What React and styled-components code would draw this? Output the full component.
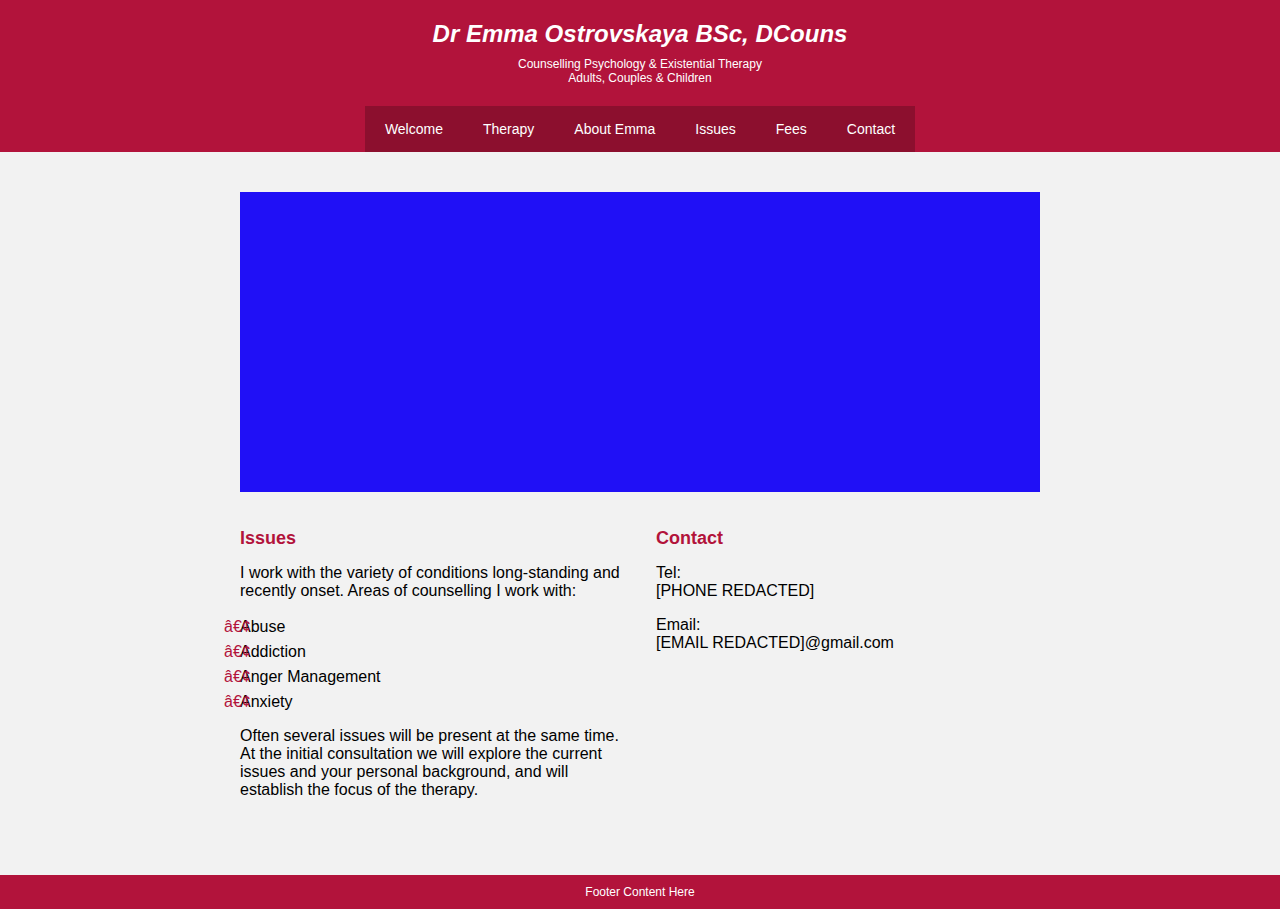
import React from "react";
import styled, { createGlobalStyle } from "styled-components";

const GlobalStyle = createGlobalStyle`
  html, body { margin: 0; padding: 0; }
  body {
    background: #f2f2f2;
    font-family: "Liberation Sans", Arial, sans-serif;
    color: #000;
  }
`;

const Page = styled.div`
  min-height: 909px;
  display: flex;
  flex-direction: column;
`;

const Header = styled.header`
  background: #b2133b;
  color: #fff;
  text-align: center;
  padding-top: 20px;
  display: flex;
  flex-direction: column;
  align-items: center;
`;

const Title = styled.h1`
  margin: 0;
  font-size: 24px;
  font-style: italic;
  font-weight: bold;
  line-height: 27px;
`;

const Subtitle = styled.p`
  margin: 10px 0 0;
  font-size: 12px;
  line-height: 14px;
`;

const Nav = styled.nav`
  margin-top: 21px;
  background: #8c0f2e;
  display: flex;
`;

const NavLink = styled.a`
  display: block;
  padding: 15px 20px;
  font-size: 14px;
  line-height: 16px;
  color: #fff;
  text-decoration: none;
`;

const Main = styled.main`
  flex: 1;
  width: 800px;
  margin: 0 auto;
  padding-top: 40px;
`;

const Banner = styled.div`
  width: 800px;
  height: 300px;
  background: #2010f6;
`;

const Columns = styled.div`
  display: grid;
  grid-template-columns: 384px 384px;
  column-gap: 32px;
  margin-top: 36px;
`;

const Column = styled.section``;

const Heading = styled.h3`
  margin: 0 0 15px;
  font-size: 18px;
  line-height: 21px;
  font-weight: bold;
  color: #b2133b;
`;

const Para = styled.p`
  margin: 0 0 16px;
  font-size: 16px;
  line-height: 18px;
`;

const List = styled.ul`
  list-style: none;
  margin: 16px 0 15px;
  padding: 0;
  display: flex;
  flex-direction: column;
  gap: 4px;
`;

const Item = styled.li`
  position: relative;
  font-size: 16px;
  line-height: 21px;
`;

const Bullet = styled.span`
  position: absolute;
  left: -16px;
  top: 0;
  color: #b2133b;
`;

const Footer = styled.footer`
  background: #b2133b;
  color: #fff;
  text-align: center;
  font-size: 12px;
  line-height: 14px;
  padding: 10px 0;
`;

const navItems = ["Welcome", "Therapy", "About Emma", "Issues", "Fees", "Contact"];
const issues = ["Abuse", "Addiction", "Anger Management", "Anxiety"];

export default function App() {
  return (
    <Page>
      <GlobalStyle />
      <Header>
        <Title>Dr Emma Ostrovskaya BSc, DCouns</Title>
        <Subtitle>
          Counselling Psychology &amp; Existential Therapy
          <br />
          Adults, Couples &amp; Children
        </Subtitle>
        <Nav>
          {navItems.map((n) => (
            <NavLink key={n} href="#">
              {n}
            </NavLink>
          ))}
        </Nav>
      </Header>
      <Main>
        <Banner />
        <Columns>
          <Column>
            <Heading>Issues</Heading>
            <Para>
              I work with the variety of conditions long-standing and recently
              onset. Areas of counselling I work with:
            </Para>
            <List>
              {issues.map((i) => (
                <Item key={i}>
                  <Bullet>â€¢</Bullet>
                  {i}
                </Item>
              ))}
            </List>
            <Para>
              Often several issues will be present at the same time. At the
              initial consultation we will explore the current issues and your
              personal background, and will establish the focus of the therapy.
            </Para>
          </Column>
          <Column>
            <Heading>Contact</Heading>
            <Para>
              Tel:
              <br />
              [PHONE REDACTED]
            </Para>
            <Para>
              Email:
              <br />
              [EMAIL REDACTED]@gmail.com
            </Para>
          </Column>
        </Columns>
      </Main>
      <Footer>Footer Content Here</Footer>
    </Page>
  );
}
